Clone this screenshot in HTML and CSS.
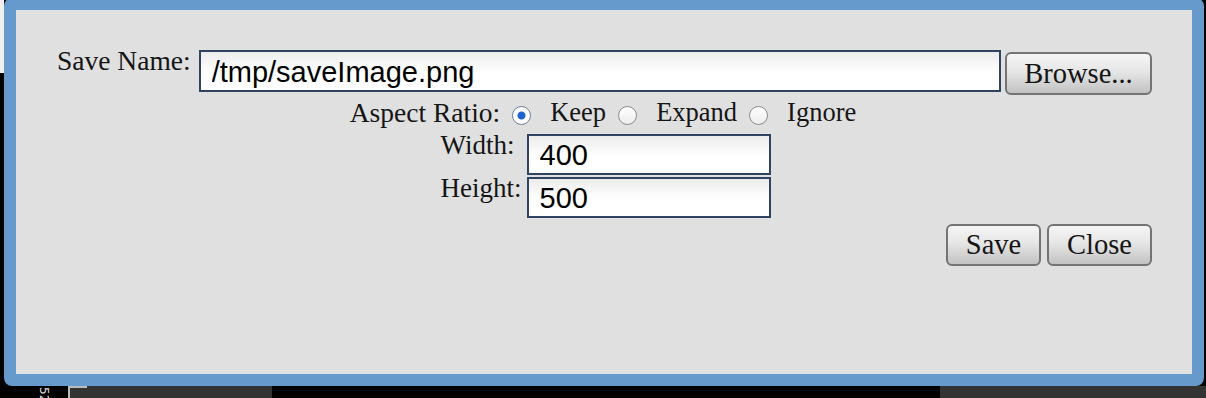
FILE: index.html
```html
<!DOCTYPE html>
<html lang="en">
<head>
  <meta charset="UTF-8">
  <title>Save Image</title>
  <link rel="stylesheet" href="styles.css">
</head>
<body>

  <div class="dialog">
    <div class="name-row">
      <label class="name-label" for="saveName">Save Name:</label>
      <input type="text" id="saveName" class="text-field" value="/tmp/saveImage.png">
      <button class="btn browse-btn">Browse...</button>
    </div>

    <div class="aspect-row">
      <span class="aspect-label">Aspect Ratio:</span>
      <input type="radio" name="aspect" id="keep" checked>
      <label for="keep">Keep</label>
      <input type="radio" name="aspect" id="expand">
      <label for="expand">Expand</label>
      <input type="radio" name="aspect" id="ignore">
      <label for="ignore">Ignore</label>
    </div>

    <table class="size-table">
      <tr>
        <td class="size-label">Width:</td>
        <td><input type="text" class="text-field size-field" value="400"></td>
      </tr>
      <tr>
        <td class="size-label">Height:</td>
        <td><input type="text" class="text-field size-field" value="500"></td>
      </tr>
    </table>

    <div class="action-row">
      <button class="btn save-btn">Save</button>
      <button class="btn close-btn">Close</button>
    </div>
  </div>

  <div class="taskbar">
    <div class="tb-label"><span>52</span></div>
    <div class="tb-panel tb-left"></div>
    <div class="tb-gap"></div>
    <div class="tb-panel tb-right"></div>
  </div>

</body>
</html>
```

FILE: styles.css
```css
body {
  margin: 0;
  width: 1206px;
  height: 398px;
  overflow: hidden;
  font-family: "Liberation Serif", "Times New Roman", serif;
  color: #151515;
  background: linear-gradient(#efefef, #efefef) 0 0 / 4px 73px no-repeat, #000;
}
.dialog {
  margin: -2px 2px 0 4px;
  padding: 40px 40px 0 41px;
  box-sizing: border-box;
  height: 388px;
  border: 12px solid #6699cc;
  border-radius: 8px;
  background-color: #e0e0e0;
}
.name-row {
  display: flex;
  align-items: flex-start;
}
.name-label {
  font-size: 27.5px;
  line-height: 22px;
  margin-right: 8px;
  white-space: nowrap;
}
.text-field {
  height: 42px;
  box-sizing: border-box;
  border: 2px solid #2f4362;
  padding: 2px 0 0 11px;
  font-family: "Liberation Sans", Arial, sans-serif;
  font-size: 29px;
  color: #000;
  background: linear-gradient(#ececec, #ffffff 55%);
  outline: none;
}
#saveName {
  flex: 1;
  min-width: 0;
}
.btn {
  height: 43px;
  box-sizing: border-box;
  font-family: "Liberation Serif", "Times New Roman", serif;
  font-size: 28.5px;
  color: #151515;
  border: 2px solid #747474;
  border-radius: 6px;
  background: linear-gradient(#f5f5f5, #e6e6e6 45%, #c2c2c2);
  padding: 0;
  cursor: pointer;
}
.browse-btn {
  width: 147px;
  margin-left: 4px;
  margin-top: 2px;
}
.aspect-row {
  display: flex;
  justify-content: center;
  align-items: flex-start;
  font-size: 26.5px;
  line-height: 27px;
  margin-top: 4px;
  height: 35px;
  padding-right: 3px;
}
.aspect-label {
  font-size: 27.5px;
}
.aspect-row input {
  appearance: none;
  -webkit-appearance: none;
  width: 19px;
  height: 19px;
  margin: 7px 19px 0 12px;
  border: 1px solid #8a8a8a;
  border-radius: 50%;
  background: linear-gradient(#ffffff, #ededed);
  box-sizing: border-box;
}
.aspect-row input:checked {
  border-color: #6f7f99;
  background: radial-gradient(circle, #1f63d2 0, #1f63d2 3.5px, #ffffff 4.5px);
}
.size-table {
  margin: 0 auto;
  border-collapse: collapse;
  position: relative;
  left: 1px;
}
.size-table td {
  padding: 0;
  vertical-align: top;
}
.size-table .size-label {
  font-size: 27px;
  line-height: 22px;
  padding-right: 4px;
  width: 82px;
}
.size-field {
  width: 244px;
  height: 41px;
  display: block;
  margin-bottom: 2px;
}
.action-row {
  display: flex;
  justify-content: flex-end;
  gap: 6px;
  margin-top: 4px;
}
.save-btn {
  width: 95px;
  height: 42px;
}
.close-btn {
  width: 105px;
  height: 42px;
}
.taskbar {
  display: flex;
  height: 12px;
}
.tb-label {
  width: 68px;
  padding-left: 37px;
  box-sizing: border-box;
  overflow: hidden;
}
.tb-label span {
  display: block;
  writing-mode: vertical-rl;
  color: #ddd;
  font-family: "DejaVu Sans", sans-serif;
  font-size: 12px;
  line-height: 14px;
  margin-top: 1px;
}
.tb-panel {
  background-color: #333;
}
.tb-left {
  width: 204px;
  background: linear-gradient(#bbb, #bbb) 0 0 / 17px 2px no-repeat, #333;
  border-left: 2px solid #bbb;
  box-sizing: border-box;
}
.tb-gap {
  width: 668px;
}
.tb-right {
  flex: 1;
}
```
